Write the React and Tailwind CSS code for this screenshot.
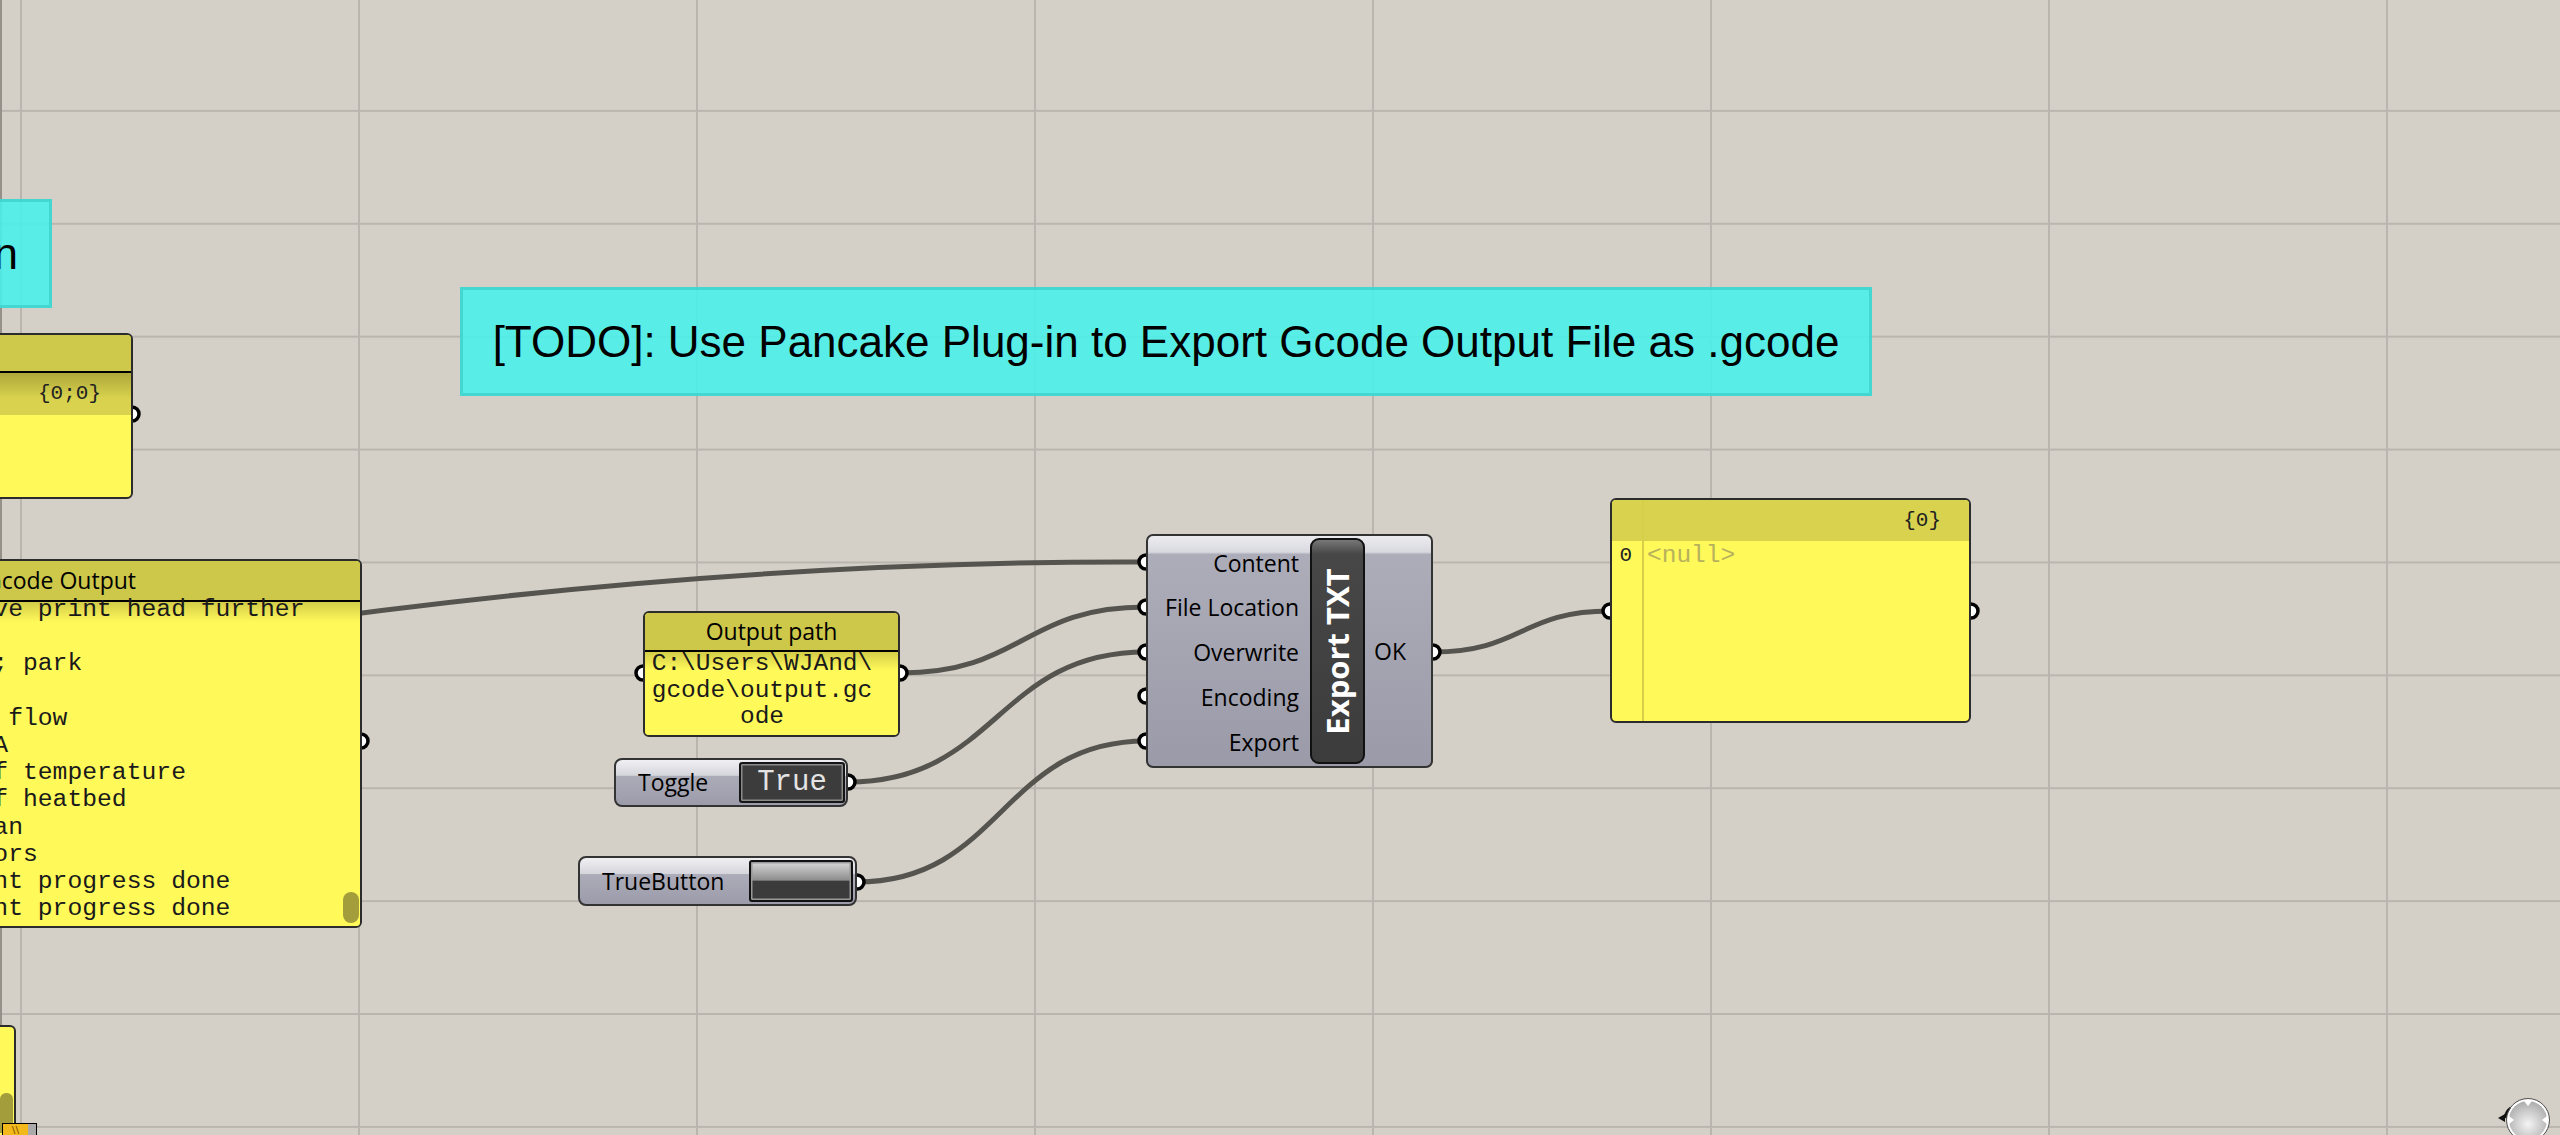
const wire = (x1, y1, x2, y2) => {
  const d = (x2 - x1) / 2;
  return `M${x1} ${y1} C${x1 + d} ${y1} ${x2 - d} ${y2} ${x2} ${y2}`;
};

const wires = [
  'M250 628 C600 578 900 561 1146 562',
  wire(900, 673, 1146, 607),
  wire(848, 782, 1146, 652),
  wire(857, 882, 1146, 741),
  wire(1433, 652, 1610, 611),
];

const grips = [
  [132, 414], [361, 741], [643, 673], [900, 673], [848, 782], [857, 882],
  [1146, 562], [1146, 607], [1146, 652], [1146, 696], [1146, 741],
  [1433, 652], [1610, 611], [1971, 611],
];

const gcodeLines = [
  'G1 Z100 F720 ; Move print head further',
  'up',
  'G1 X0 Y200 F3600 ; park',
  'G4 ; wait',
  'M221 S100 ; reset flow',
  'M900 K0 ; reset LA',
  'M104 S0 ; turn off temperature',
  'M140 S0 ; turn off heatbed',
  'M107 ; stop the fan',
  'M84 ; disable motors',
  'M73 P100 R0 ; print progress done',
  'M73 Q100 S0 ; print progress done',
];

const inputs = ['Content', 'File Location', 'Overwrite', 'Encoding', 'Export'];

const sans = "font-['Open_Sans',sans-serif]";
const mono = "font-['Liberation_Mono',monospace]";

function NavWidget() {
  return (
    <svg className="absolute left-[2488px] top-[1094px]" width="72" height="41" viewBox="0 0 72 41">
      <defs>
        <radialGradient id="navg" cx="0.5" cy="0.6" r="0.6">
          <stop offset="0" stopColor="#f4f4f4" />
          <stop offset="1" stopColor="#a9a9a9" />
        </radialGradient>
      </defs>
      <path d="M10 24 L17 20 L17 28 Z" fill="#111" />
      <path d="M17 24 C18 18 20 16 23 14" stroke="#111" strokeWidth="3" fill="none" />
      <circle cx="40" cy="26" r="20" fill="url(#navg)" stroke="#fff" strokeWidth="2" />
      <circle cx="40" cy="26" r="21.5" fill="none" stroke="#555" strokeWidth="1" />
      <path d="M36 7 L44 7 L40 12 Z" fill="#fff" />
      <path d="M59 22 L59 30 L54 26 Z" fill="#fff" />
      <path d="M21 22 L21 30 L26 26 Z" fill="#fff" />
    </svg>
  );
}

export default function App() {
  return (
    <div className="relative w-[2560px] h-[1135px] overflow-hidden bg-[#d4d0c8] bg-[linear-gradient(to_right,#bab6af_2px,transparent_2px),linear-gradient(to_bottom,#bab6af_2px,transparent_2px)] bg-[size:338px_112.9px] bg-[position:20px_-3px]">
      {/* canvas edge */}
      <div className="absolute left-0 top-0 w-[2px] h-full bg-[#95918a]" />

      {/* groups */}
      <div className="absolute left-[-400px] top-[199px] w-[452px] h-[109px] bg-[#4bf0ea]/90 border-[3px] border-[#3fd0ca]/80 flex items-center justify-end pr-[31px]">
        <span className="font-['Liberation_Sans',Arial,sans-serif] text-[44px] text-black leading-none">Gcode Generation</span>
      </div>
      <div className="absolute left-[460px] top-[287px] w-[1412px] h-[109px] bg-[#4bf0ea]/90 border-[3px] border-[#3fd0ca]/80 flex items-center justify-center">
        <span className="font-['Liberation_Sans',Arial,sans-serif] text-[44px] text-black leading-none">
          [TODO]: Use Pancake Plug-in to Export Gcode Output File as .gcode
        </span>
      </div>

      {/* wires and grips */}
      <svg className="absolute inset-0" width="2560" height="1135">
        {wires.map((d, i) => (
          <path key={i} d={d} fill="none" stroke="#56544f" strokeWidth="5" />
        ))}
        {grips.map(([x, y], i) => (
          <circle key={i} cx={x} cy={y} r="7" fill="#fff" stroke="#000" strokeWidth="3.5" />
        ))}
      </svg>

      {/* tree path panel (top left) */}
      <div className="absolute left-[-200px] top-[333px] w-[333px] h-[166px] rounded-[6px] border-2 border-[#2c2c2c] bg-[#fff95a] overflow-hidden flex flex-col">
        <div className="h-[38px] bg-[#cfc94b] border-b-2 border-black" />
        <div className={`h-[42px] bg-[linear-gradient(to_bottom,#aea73a,#d8d24e_60%)] flex items-center justify-end pr-[30px] ${mono} text-[21px] text-[#222]`}>
          {'{0;0}'}
        </div>
      </div>

      {/* Gcode Output panel */}
      <div className="absolute left-[-263px] top-[559px] w-[625px] h-[369px] rounded-[6px] border-2 border-[#2c2c2c] bg-[#fff95a] overflow-hidden flex flex-col">
        <div className={`h-[41px] shrink-0 bg-[#cdc74a] border-b-2 border-black flex items-center justify-center pl-[22px] ${sans} text-[23px] text-black`}>
          Gcode Output
        </div>
        <div className="relative flex-1 bg-[linear-gradient(to_bottom,#d3cc48_0px,#fff95a_20px)]">
          <div className={`mt-[-6px] pl-[2.5px] ${mono} text-[24.7px] leading-[27.2px] text-[#1a1a1a] whitespace-pre`}>
            {gcodeLines.map((l, i) => (
              <div key={i}>{l}</div>
            ))}
          </div>
          <div className="absolute right-[1px] bottom-[3px] w-[16px] h-[31px] rounded-full bg-[#a39d3b]" />
        </div>
      </div>

      {/* Output path panel */}
      <div className="absolute left-[643px] top-[611px] w-[257px] h-[126px] rounded-[6px] border-2 border-[#2c2c2c] bg-[#fff95a] overflow-hidden flex flex-col">
        <div className={`h-[39px] shrink-0 bg-[#cdc74a] border-b-2 border-black flex items-center justify-center ${sans} text-[23px] text-black`}>
          Output path
        </div>
        <div className={`flex-1 pr-[19px] bg-[linear-gradient(to_bottom,#d3cc48_0px,#fff95a_18px)] text-center ${mono} text-[24.5px] leading-[26.5px] text-[#1a1a1a] whitespace-pre`}>
          <div className="-mt-[1px]">C:\Users\WJAnd\</div>
          <div>gcode\output.gc</div>
          <div>ode</div>
        </div>
      </div>

      {/* Toggle */}
      <div className="absolute left-[614px] top-[758px] w-[234px] h-[49px] rounded-[8px] border-2 border-[#333] bg-[linear-gradient(to_bottom,#f0f0f3_0%,#d5d5dc_34%,#acacb9_36%,#9b9baa_100%)] flex items-center justify-between pl-[22px] pr-[1px]">
        <span className={`${sans} text-[23px] text-black`}>Toggle</span>
        <div className="w-[106px] h-[41px] rounded-[3px] border-2 border-[#151515] bg-[#3c3c3c] shadow-[inset_0_0_0_1.5px_#8a8a8a] flex items-center justify-center">
          <span className={`${mono} text-[29px] leading-none text-[#e4e4e4]`}>True</span>
        </div>
      </div>

      {/* TrueButton */}
      <div className="absolute left-[578px] top-[856px] w-[279px] h-[50px] rounded-[8px] border-2 border-[#333] bg-[linear-gradient(to_bottom,#f0f0f3_0%,#d5d5dc_34%,#acacb9_36%,#9b9baa_100%)] flex items-center justify-between pl-[22px] pr-[2px]">
        <span className={`${sans} text-[23px] text-black`}>TrueButton</span>
        <div className="w-[104px] h-[42px] rounded-[3px] border-2 border-[#111] shadow-[inset_0_0_0_1.5px_#999] bg-[linear-gradient(to_bottom,#d8d8d8_0%,#8c8c8c_48%,#3b3b3b_50%,#3b3b3b_100%)]" />
      </div>

      {/* Export TXT component */}
      <div className="absolute left-[1146px] top-[534px] w-[287px] h-[234px] rounded-[7px] border-2 border-[#333] bg-[linear-gradient(to_bottom,#ececf0_0%,#d8d8df_7%,#adadba_8%,#9a9aa8_100%)] flex items-stretch">
        <div className={`w-[152px] flex flex-col pt-[4.5px] pr-[1px] ${sans} text-[23px] text-black`}>
          {inputs.map((t) => (
            <div key={t} className="h-[44.75px] flex items-center justify-end">{t}</div>
          ))}
        </div>
        <div className="ml-[10px] my-[2px] w-[55px] rounded-[9px] border-2 border-[#111] bg-[linear-gradient(to_bottom,#777_0px,#474747_14px,#3c3c3c_100%)] flex items-center justify-center">
          <span className="-rotate-90 whitespace-nowrap font-['Open_Sans',sans-serif] font-bold text-[31px] leading-none text-white">Export TXT</span>
        </div>
        <div className={`flex items-center pl-[9px] ${sans} text-[23px] text-black`}>OK</div>
      </div>

      {/* output data panel */}
      <div className="absolute left-[1610px] top-[498px] w-[361px] h-[225px] rounded-[6px] border-2 border-[#2c2c2c] bg-[#fff95a] overflow-hidden flex flex-col">
        <div className={`h-[41px] shrink-0 bg-[#d8d24e] flex items-center justify-end pr-[28px] ${mono} text-[21px] text-[#222]`}>
          {'{0}'}
        </div>
        <div className="flex-1 flex">
          <div className={`w-[30px] text-right pr-[10px] ${mono} text-[21px] leading-[30px] text-[#222]`}>0</div>
          <div className={`pl-[5px] ${mono} text-[24.5px] leading-[30px] text-[#b7b15c]`}>{'<null>'}</div>
        </div>
        <div className="absolute left-[30px] top-0 bottom-0 w-[2px] bg-[#d6cf48]" />
      </div>

      {/* bottom-left partial panel */}
      <div className="absolute left-[-100px] top-[1025px] w-[116px] h-[200px] rounded-[6px] border-2 border-[#2c2c2c] bg-[#fff95a]">
        <div className="absolute right-[1px] top-[66px] w-[13px] h-[40px] rounded-t-[6px] bg-[#a39d3b]" />
      </div>
      <div className="absolute left-[2px] top-[1123px] w-[35px] h-[14px] bg-[#aaa] border border-black flex">
        <div className="w-[25px] h-full bg-[#f3b91b] flex items-center justify-center text-[10px] text-[#7a4a00] leading-none">\\</div>
      </div>

      <NavWidget />
    </div>
  );
}
